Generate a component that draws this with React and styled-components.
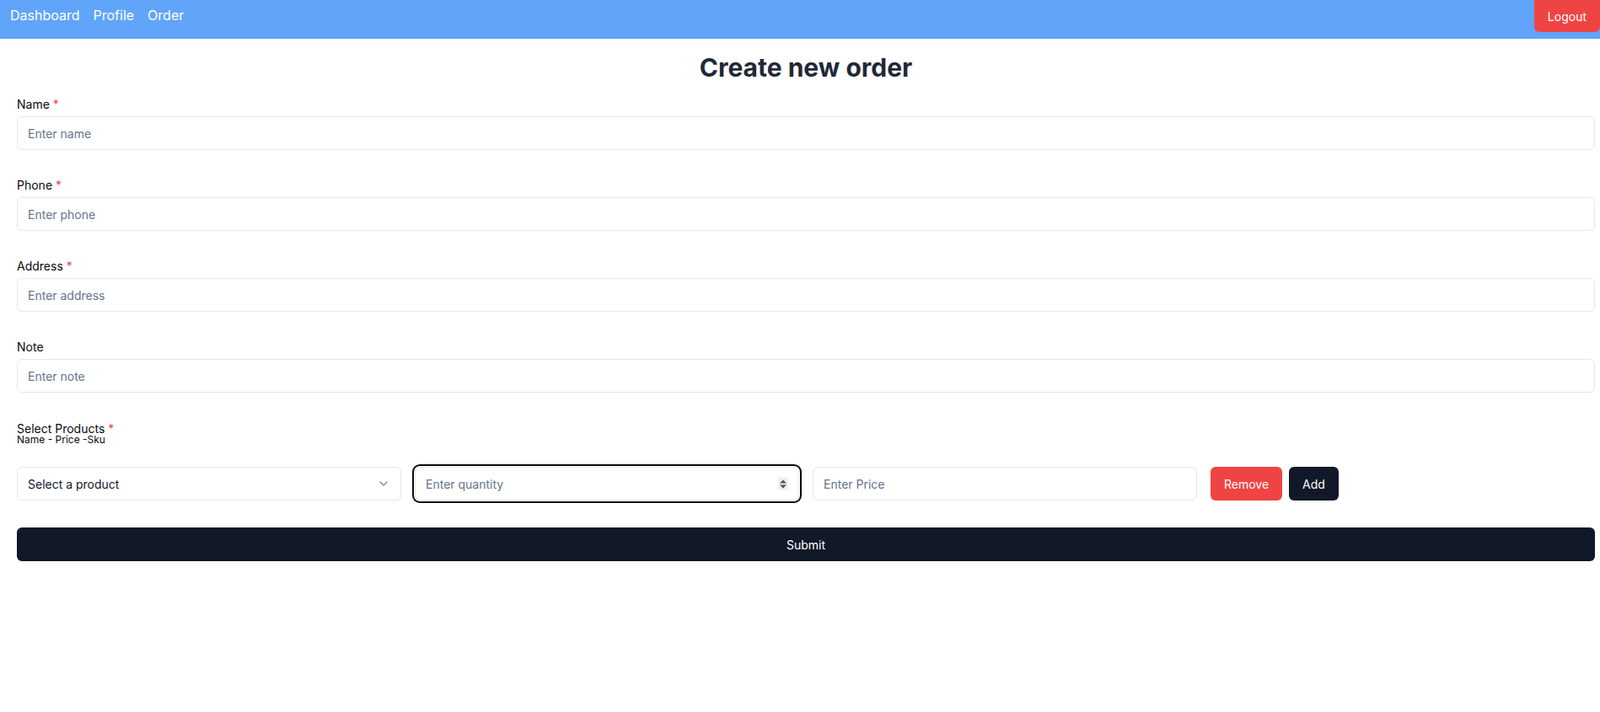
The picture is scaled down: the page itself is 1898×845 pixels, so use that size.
import styled, { createGlobalStyle, css } from "styled-components";

const GlobalStyle = createGlobalStyle`
  * { box-sizing: border-box; }
  body {
    margin: 0;
    font-family: Inter, "Noto Sans", sans-serif;
    background: #fff;
    color: #0a0a0a;
  }
`;

const Nav = styled.nav`
  height: 46px;
  background: #60a5fa;
  display: flex;
  justify-content: space-between;
  align-items: flex-start;
`;
const NavLinks = styled.div`
  display: flex;
  gap: 16px;
  padding: 6px 0 0 12px;
`;
const NavLink = styled.a`
  color: #fff;
  font-size: 16px;
  line-height: 24px;
  text-decoration: none;
  cursor: pointer;
`;
const LogoutButton = styled.button`
  height: 38px;
  padding: 0 16px;
  border: none;
  border-radius: 0 0 6px 6px;
  background: #ef4444;
  color: #fff;
  font-family: inherit;
  font-size: 14px;
  cursor: pointer;
`;

const Page = styled.main`
  padding: 16px 6px 0 20px;
`;
const Title = styled.h1`
  margin: 0 0 16px;
  text-align: center;
  font-size: 30px;
  line-height: 36px;
  font-weight: 700;
  color: #1f2937;
`;
const Field = styled.div`
  display: flex;
  flex-direction: column;
  gap: 4px;
  margin-bottom: 32px;
`;
const Label = styled.label`
  font-size: 14px;
  line-height: 20px;
  font-weight: 400;
`;
const Required = styled.span`
  color: #ef4444;
  margin-left: 4px;
`;
const Hint = styled.div`
  font-size: 12px;
  line-height: 12px;
  margin: -3px 0 26px;
`;
const inputBase = css`
  height: 40px;
  width: 100%;
  border: 1px solid #e2e8f0;
  border-radius: 6px;
  padding: 0 12px;
  font-family: inherit;
  font-size: 14px;
  color: #0f172a;
  background: #fff;
  outline: none;
  &::placeholder { color: #64748b; }
`;
const Input = styled.input`
  ${inputBase}
  ${(p) =>
    p.$focused &&
    css`
      box-shadow: 0 0 0 1px #fff, 0 0 0 3px #0a0a0a;
    `}
`;
const ProductRow = styled.div`
  display: grid;
  grid-template-columns: repeat(4, 1fr);
  gap: 16px;
  margin-bottom: 32px;
`;
const SelectBox = styled.button`
  ${inputBase}
  display: flex;
  align-items: center;
  justify-content: space-between;
  text-align: left;
  cursor: pointer;
`;
const Chevron = styled.svg`
  width: 16px;
  height: 16px;
  opacity: 0.5;
`;
const QtyWrap = styled.div`
  position: relative;
`;
const Spinner = styled.span`
  position: absolute;
  right: 13px;
  top: 50%;
  transform: translateY(-50%);
  width: 12px;
  height: 15px;
  background: #efefef;
  display: flex;
  flex-direction: column;
  align-items: center;
  justify-content: center;
  gap: 2px;
`;
const Arrow = styled.span`
  width: 0;
  height: 0;
  border-left: 4px solid transparent;
  border-right: 4px solid transparent;
  ${(p) =>
    p.$up
      ? css`border-bottom: 4px solid #505050;`
      : css`border-top: 4px solid #505050;`}
`;
const Actions = styled.div`
  display: flex;
  gap: 8px;
`;
const Button = styled.button`
  height: 40px;
  padding: 0 16px;
  border: none;
  border-radius: 6px;
  background: ${(p) => (p.$danger ? "#ef4444" : "#111827")};
  color: #fff;
  font-family: inherit;
  font-size: 14px;
  font-weight: 400;
  cursor: pointer;
`;
const SubmitButton = styled(Button)`
  width: 100%;
`;

const fields = [
  { label: "Name", placeholder: "Enter name", required: true },
  { label: "Phone", placeholder: "Enter phone", required: true },
  { label: "Address", placeholder: "Enter address", required: true },
  { label: "Note", placeholder: "Enter note" },
];

export default function App() {
  return (
    <>
      <GlobalStyle />
      <Nav>
        <NavLinks>
          <NavLink>Dashboard</NavLink>
          <NavLink>Profile</NavLink>
          <NavLink>Order</NavLink>
        </NavLinks>
        <LogoutButton>Logout</LogoutButton>
      </Nav>
      <Page>
        <Title>Create new order</Title>
        {fields.map((f) => (
          <Field key={f.label}>
            <Label>
              {f.label}
              {f.required && <Required>*</Required>}
            </Label>
            <Input placeholder={f.placeholder} />
          </Field>
        ))}
        <Label>
          Select Products<Required>*</Required>
        </Label>
        <Hint>Name - Price -Sku</Hint>
        <ProductRow>
          <SelectBox type="button">
            <span>Select a product</span>
            <Chevron viewBox="0 0 24 24" fill="none" stroke="currentColor" strokeWidth="2" strokeLinecap="round" strokeLinejoin="round">
              <path d="m6 9 6 6 6-6" />
            </Chevron>
          </SelectBox>
          <QtyWrap>
            <Input $focused placeholder="Enter quantity" />
            <Spinner>
              <Arrow $up />
              <Arrow />
            </Spinner>
          </QtyWrap>
          <Input placeholder="Enter Price" />
          <Actions>
            <Button $danger>Remove</Button>
            <Button>Add</Button>
          </Actions>
        </ProductRow>
        <SubmitButton>Submit</SubmitButton>
      </Page>
    </>
  );
}
